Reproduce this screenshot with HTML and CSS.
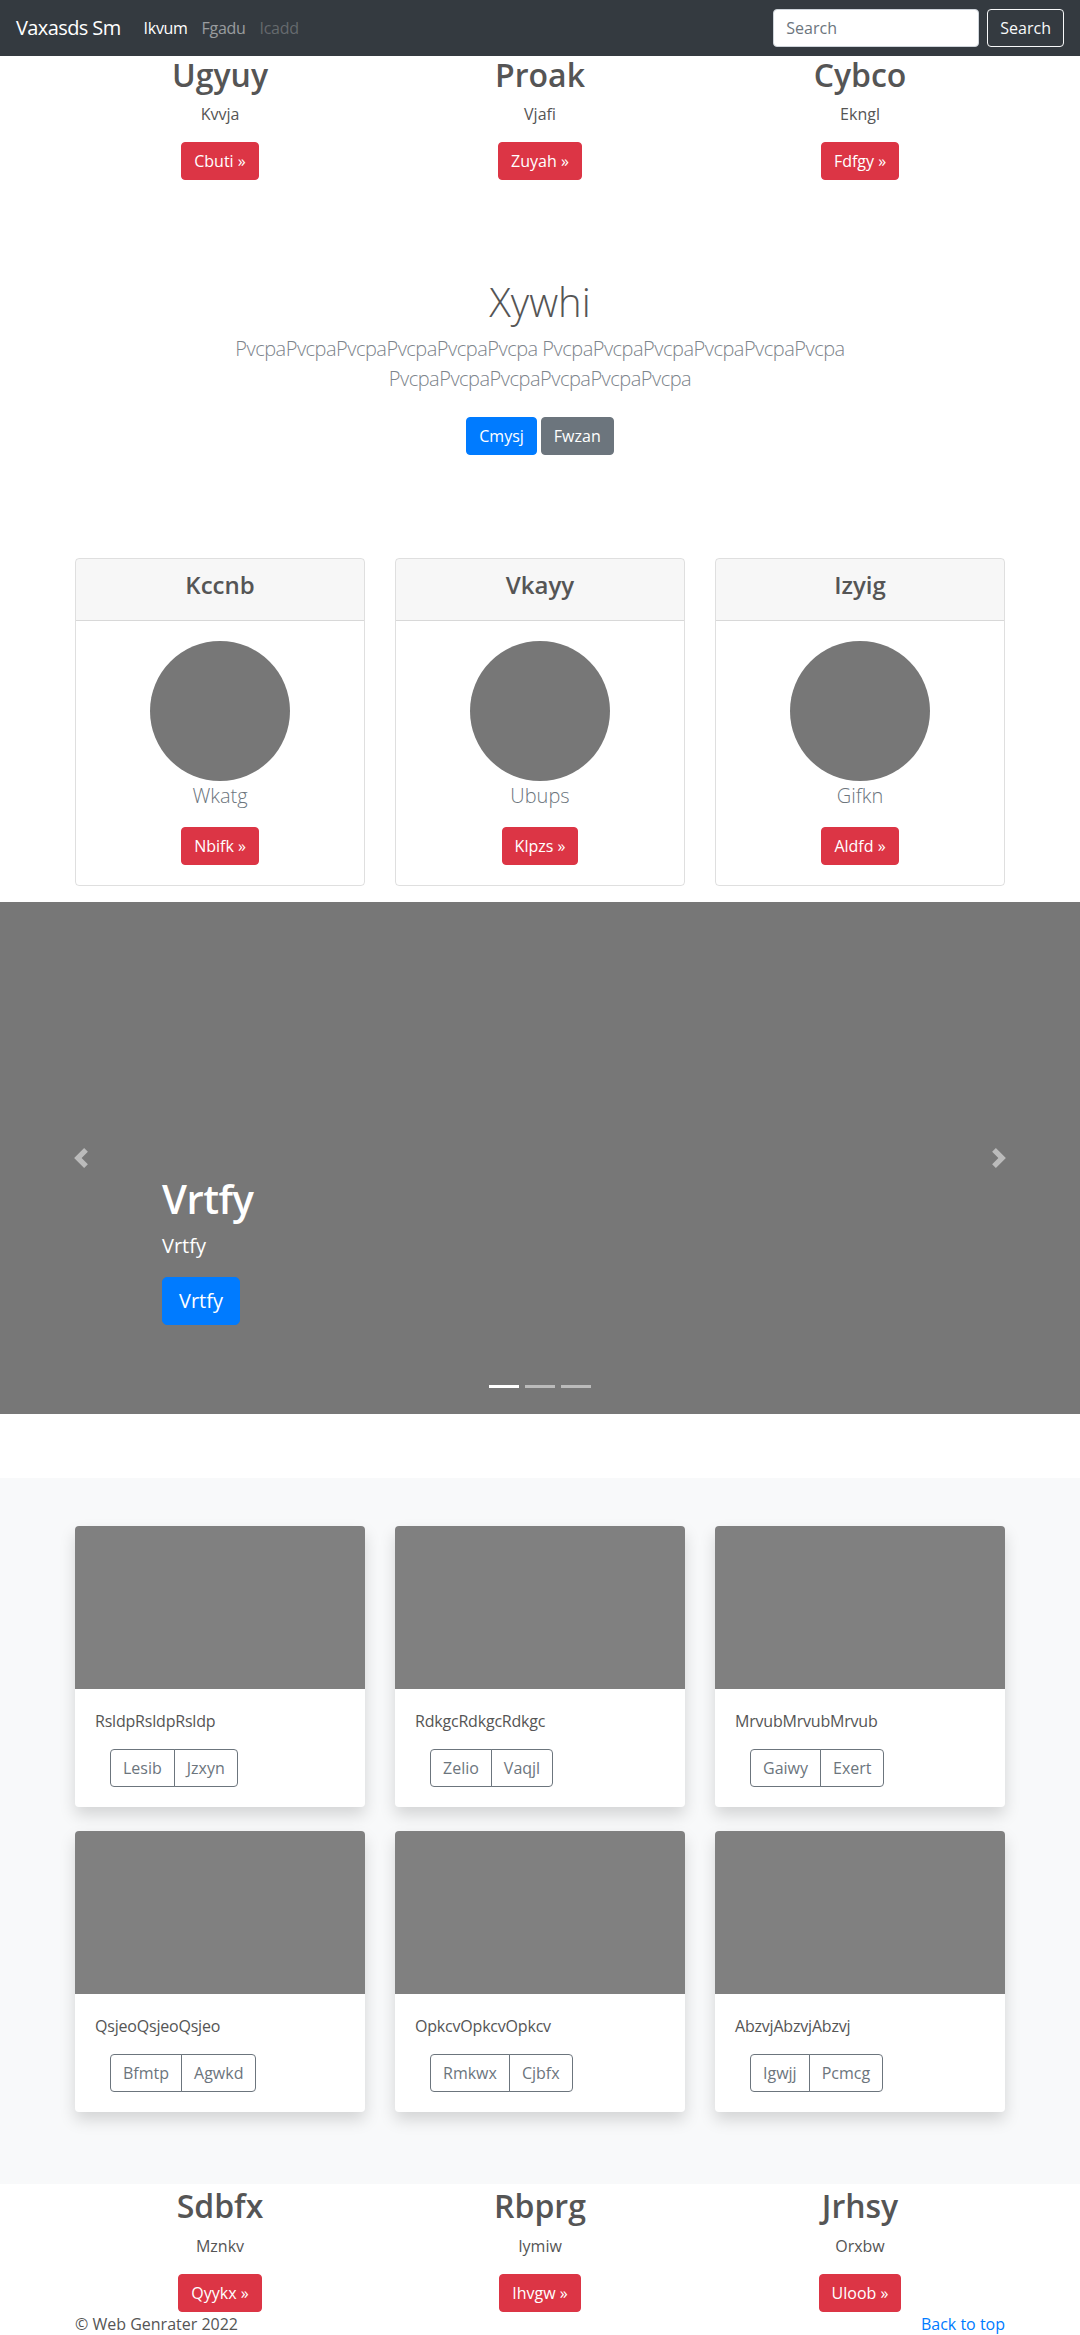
FILE: index.html
```html
<!DOCTYPE html>
<html lang="en">
<head>
<meta charset="utf-8">
<title>Vaxasds Sm</title>
<link rel="stylesheet" href="styles.css">
</head>
<body>
<nav class="navbar">
  <a class="brand" href="#">Vaxasds Sm</a>
  <ul class="nav">
    <li><a class="active" href="#">Ikvum</a></li>
    <li><a href="#">Fgadu</a></li>
    <li><a class="disabled" href="#">Icadd</a></li>
  </ul>
  <form class="search">
    <input type="text" placeholder="Search">
    <button type="button">Search</button>
  </form>
</nav>

<section class="container marketing">
  <div class="col">
    <h2>Ugyuy</h2>
    <p>Kvvja</p>
    <p class="cta"><a class="btn btn-danger" href="#">Cbuti &raquo;</a></p>
  </div>
  <div class="col">
    <h2>Proak</h2>
    <p>Vjafi</p>
    <p class="cta"><a class="btn btn-danger" href="#">Zuyah &raquo;</a></p>
  </div>
  <div class="col">
    <h2>Cybco</h2>
    <p>Ekngl</p>
    <p class="cta"><a class="btn btn-danger" href="#">Fdfgy &raquo;</a></p>
  </div>
</section>

<section class="jumbo">
  <h1>Xywhi</h1>
  <p class="lead">PvcpaPvcpaPvcpaPvcpaPvcpaPvcpa PvcpaPvcpaPvcpaPvcpaPvcpaPvcpa PvcpaPvcpaPvcpaPvcpaPvcpaPvcpa</p>
  <p class="jumbo-actions">
    <a class="btn btn-primary" href="#">Cmysj</a>
    <a class="btn btn-secondary" href="#">Fwzan</a>
  </p>
</section>

<section class="container profiles">
  <div class="pcard">
    <div class="pcard-header"><h4>Kccnb</h4></div>
    <div class="pcard-body">
      <div class="avatar"></div>
      <p class="pname">Wkatg</p>
      <a class="btn btn-danger" href="#">Nbifk &raquo;</a>
    </div>
  </div>
  <div class="pcard">
    <div class="pcard-header"><h4>Vkayy</h4></div>
    <div class="pcard-body">
      <div class="avatar"></div>
      <p class="pname">Ubups</p>
      <a class="btn btn-danger" href="#">Klpzs &raquo;</a>
    </div>
  </div>
  <div class="pcard">
    <div class="pcard-header"><h4>Izyig</h4></div>
    <div class="pcard-body">
      <div class="avatar"></div>
      <p class="pname">Gifkn</p>
      <a class="btn btn-danger" href="#">Aldfd &raquo;</a>
    </div>
  </div>
</section>

<div class="carousel">
  <a class="ctrl prev" href="#" aria-label="Previous">
    <svg viewBox="0 0 8 8" width="20" height="20"><path fill="#fff" d="M5.25 0l-4 4 4 4 1.5-1.5L4.25 4l2.5-2.5L5.25 0z"/></svg>
  </a>
  <div class="caption">
    <h1>Vrtfy</h1>
    <p class="cap-text">Vrtfy</p>
    <p class="cap-cta"><a class="btn btn-primary btn-lg" href="#">Vrtfy</a></p>
  </div>
  <a class="ctrl next" href="#" aria-label="Next">
    <svg viewBox="0 0 8 8" width="20" height="20"><path fill="#fff" d="M2.75 0l-1.5 1.5L3.75 4l-2.5 2.5L2.75 8l4-4-4-4z"/></svg>
  </a>
  <ol class="indicators">
    <li class="on"></li>
    <li></li>
    <li></li>
  </ol>
</div>

<section class="album">
  <div class="container album-grid">
    <div class="acard">
      <div class="thumb"></div>
      <div class="acard-body">
        <p>RsldpRsldpRsldp</p>
        <div class="btn-group"><a href="#">Lesib</a><a href="#">Jzxyn</a></div>
      </div>
    </div>
    <div class="acard">
      <div class="thumb"></div>
      <div class="acard-body">
        <p>RdkgcRdkgcRdkgc</p>
        <div class="btn-group"><a href="#">Zelio</a><a href="#">Vaqjl</a></div>
      </div>
    </div>
    <div class="acard">
      <div class="thumb"></div>
      <div class="acard-body">
        <p>MrvubMrvubMrvub</p>
        <div class="btn-group"><a href="#">Gaiwy</a><a href="#">Exert</a></div>
      </div>
    </div>
    <div class="acard">
      <div class="thumb"></div>
      <div class="acard-body">
        <p>QsjeoQsjeoQsjeo</p>
        <div class="btn-group"><a href="#">Bfmtp</a><a href="#">Agwkd</a></div>
      </div>
    </div>
    <div class="acard">
      <div class="thumb"></div>
      <div class="acard-body">
        <p>OpkcvOpkcvOpkcv</p>
        <div class="btn-group"><a href="#">Rmkwx</a><a href="#">Cjbfx</a></div>
      </div>
    </div>
    <div class="acard">
      <div class="thumb"></div>
      <div class="acard-body">
        <p>AbzvjAbzvjAbzvj</p>
        <div class="btn-group"><a href="#">Igwjj</a><a href="#">Pcmcg</a></div>
      </div>
    </div>
  </div>
</section>

<section class="container marketing bottom">
  <div class="col">
    <h2>Sdbfx</h2>
    <p>Mznkv</p>
    <p class="cta"><a class="btn btn-danger" href="#">Qyykx &raquo;</a></p>
  </div>
  <div class="col">
    <h2>Rbprg</h2>
    <p>Iymiw</p>
    <p class="cta"><a class="btn btn-danger" href="#">Ihvgw &raquo;</a></p>
  </div>
  <div class="col">
    <h2>Jrhsy</h2>
    <p>Orxbw</p>
    <p class="cta"><a class="btn btn-danger" href="#">Uloob &raquo;</a></p>
  </div>
</section>

<footer class="container footer">
  <p>&copy; Web Genrater 2022</p>
  <a class="top-link" href="#">Back to top</a>
</footer>
</body>
</html>
```

FILE: styles.css
```css
* { box-sizing: border-box; }

html, body { margin: 0; padding: 0; }

body {
  font-family: "Open Sans", "Noto Sans", "DejaVu Sans", sans-serif;
  font-size: 16px;
  line-height: 1.5;
  color: #555;
  background: #fff;
}

p { margin: 0 0 16px; }
h1, h2, h4 { margin: 0 0 8px; line-height: 1.2; }

/* ---------- navbar ---------- */
.navbar {
  height: 56px;
  background: #343a40;
  display: flex;
  align-items: center;
  padding: 0 16px;
}
.brand {
  font-size: 20px;
  line-height: 30px;
  letter-spacing: -0.6px;
  color: #fff;
  text-decoration: none;
  margin-right: 16px;
}
.nav {
  display: flex;
  list-style: none;
  margin: 0;
  padding: 0;
  flex: 1;
}
.nav a {
  display: block;
  padding: 8px 7px;
  letter-spacing: -0.3px;
  color: rgba(255, 255, 255, .5);
  text-decoration: none;
}
.nav a.active { color: #fff; }
.nav a.disabled { color: rgba(255, 255, 255, .25); }

.search { display: flex; gap: 8px; }
.search input {
  width: 206px;
  height: 38px;
  padding: 6px 12px;
  border: 1px solid #ced4da;
  border-radius: 4px;
  font: inherit;
  color: #495057;
  background: #fff;
}
.search input::placeholder { color: #6c757d; }
.search button {
  height: 38px;
  padding: 6px 12px;
  border: 1px solid #f8f9fa;
  border-radius: 4px;
  background: transparent;
  color: #f8f9fa;
  font: inherit;
}

/* ---------- generic ---------- */
.container {
  width: 960px;
  margin: 0 auto;
  padding: 0 15px;
}

.btn {
  display: inline-block;
  padding: 6px 12px;
  font-size: 16px;
  line-height: 24px;
  border: 1px solid transparent;
  border-radius: 4px;
  color: #fff;
  text-decoration: none;
  vertical-align: middle;
}
.btn-danger { background: #dc3545; border-color: #dc3545; }
.btn-primary { background: #007bff; border-color: #007bff; }
.btn-secondary { background: #6c757d; border-color: #6c757d; }
.btn-lg { padding: 8px 16px; font-size: 20px; line-height: 30px; border-radius: 5px; }

/* ---------- marketing columns ---------- */
.marketing {
  display: grid;
  grid-template-columns: repeat(3, 1fr);
  column-gap: 30px;
  text-align: center;
}
.marketing h2 {
  font-size: 32px;
  font-weight: 600;
  color: #555;
}
.marketing .cta { margin-bottom: 16px; }
.marketing.bottom { padding-top: 3px; }
.marketing.bottom .cta { margin-bottom: 0; }

/* ---------- jumbotron ---------- */
.jumbo {
  padding-top: 82px;
  text-align: center;
}
.jumbo h1 {
  font-size: 40px;
  font-weight: 300;
  color: #555;
}
.lead {
  max-width: 680px;
  margin: 0 auto 16px;
  font-size: 20px;
  line-height: 30px;
  font-weight: 300;
  letter-spacing: -0.5px;
  color: #7d848b;
}
.jumbo-actions {
  display: flex;
  justify-content: center;
  gap: 4px;
  margin: 0;
  padding: 7px 0 25px;
}

/* ---------- profile cards ---------- */
.profiles {
  display: grid;
  grid-template-columns: repeat(3, 1fr);
  column-gap: 30px;
  margin-top: 78px;
}
.pcard {
  border: 1px solid rgba(0, 0, 0, .125);
  border-radius: 4px;
  text-align: center;
  overflow: hidden;
}
.pcard-header {
  padding: 12px 20px;
  background: rgba(0, 0, 0, .03);
  border-bottom: 1px solid rgba(0, 0, 0, .125);
}
.pcard-header h4 {
  font-size: 24px;
  font-weight: 600;
  color: #555;
}
.pcard-body { padding: 20px; }
.avatar {
  width: 140px;
  height: 140px;
  border-radius: 50%;
  background: #777;
  margin: 0 auto;
}
.pname {
  font-size: 20px;
  line-height: 30px;
  font-weight: 300;
  color: #6c757d;
}

/* ---------- carousel ---------- */
.carousel {
  position: relative;
  height: 512px;
  margin: 16px 0 64px;
  background: #777;
}
.ctrl {
  position: absolute;
  top: 0;
  bottom: 0;
  width: 15%;
  display: flex;
  align-items: center;
  justify-content: center;
  opacity: .5;
}
.ctrl.prev { left: 0; }
.ctrl.next { right: 0; }
.caption {
  position: absolute;
  left: 15%;
  right: 15%;
  bottom: 48px;
  padding: 20px 0 41px;
  color: #fff;
}
.caption h1 {
  font-size: 40px;
  font-weight: 600;
  letter-spacing: -0.5px;
  color: #fff;
}
.cap-text { font-size: 20px; line-height: 30px; }
.cap-cta { margin: 0; }
.indicators {
  position: absolute;
  left: 0;
  right: 0;
  bottom: 16px;
  display: flex;
  justify-content: center;
  list-style: none;
  margin: 0;
  padding: 0;
}
.indicators li {
  width: 30px;
  height: 23px;
  margin: 0 3px;
  border-top: 10px solid transparent;
  border-bottom: 10px solid transparent;
  background: rgba(255, 255, 255, .5);
  background-clip: padding-box;
}
.indicators li.on { background-color: #fff; }

/* ---------- album ---------- */
.album {
  background: #f8f9fa;
  padding: 48px 0;
}
.album-grid {
  display: grid;
  grid-template-columns: repeat(3, 1fr);
  column-gap: 30px;
}
.acard {
  background: #fff;
  border-radius: 4px;
  overflow: hidden;
  margin-bottom: 24px;
  box-shadow: 0 8px 16px rgba(0, 0, 0, .15);
}
.thumb {
  height: 163px;
  background: #808080;
}
.acard-body { padding: 20px; }
.acard-body p { color: #555; letter-spacing: -0.2px; }
.btn-group {
  display: inline-flex;
  margin-left: 15px;
  vertical-align: top;
}
.btn-group a {
  display: block;
  padding: 6px 12px;
  line-height: 24px;
  color: #6c757d;
  text-decoration: none;
  border: 1px solid #6c757d;
}
.btn-group a:first-child { border-radius: 4px 0 0 4px; }
.btn-group a:last-child { border-radius: 0 4px 4px 0; margin-left: -1px; }

/* ---------- footer ---------- */
.footer {
  display: flex;
  justify-content: space-between;
}
.footer p { margin: 0; }
.top-link { color: #007bff; text-decoration: none; }
```
